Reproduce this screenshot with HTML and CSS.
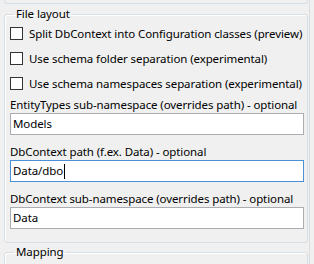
FILE: index.html
```html
<!DOCTYPE html>
<html lang="en">
<head>
  <meta charset="UTF-8">
  <title>File layout</title>
  <link rel="stylesheet" href="styles.css">
</head>
<body>
  <div class="panel">
    <div class="group-tail"></div>

    <fieldset class="group">
      <legend>File layout</legend>
      <div class="checks">
        <label class="check"><span class="box"></span>Split DbContext into Configuration classes (preview)</label>
        <label class="check"><span class="box"></span>Use schema folder separation (experimental)</label>
        <label class="check"><span class="box"></span>Use schema namespaces separation (experimental)</label>
      </div>
      <div class="field first">
        <div class="field-label">EntityTypes sub-namespace (overrides path) - optional</div>
        <div class="textbox">Models</div>
      </div>
      <div class="field">
        <div class="field-label">DbContext path (f.ex. Data) - optional</div>
        <div class="textbox focused">Data/dbo<span class="caret"></span></div>
      </div>
      <div class="field">
        <div class="field-label">DbContext sub-namespace (overrides path) - optional</div>
        <div class="textbox">Data</div>
      </div>
    </fieldset>

    <fieldset class="group">
      <legend>Mapping</legend>
    </fieldset>
  </div>
</body>
</html>
```

FILE: styles.css
```css
* {
  box-sizing: border-box;
}
body {
  margin: 0;
  background: #f0f0f0;
  color: #000;
  font-family: "Noto Sans", sans-serif;
  font-size: 11.5px;
  letter-spacing: -0.1px;
  overflow: hidden;
}
.panel {
  width: 310px;
  height: 264px;
  padding: 0 1px 0 4px;
  border-right: 1px solid #dcdcdc;
}
.group-tail {
  width: 304px;
  height: 4px;
  border: 1px solid #d5dfe5;
  border-top: none;
  border-radius: 0 0 3px 3px;
}
.group {
  width: 304px;
  margin: 2px 0 0 0;
  padding: 0 3px 13px 5px;
  border: 1px solid #d5dfe5;
  border-radius: 3px;
  box-shadow: inset 1px 1px 0 #fff;
}
.group + .group {
  margin-top: 1px;
}
.group legend {
  margin-left: 4px;
  padding: 0 2px;
  line-height: 16px;
}
.checks {
  display: flex;
  flex-direction: column;
  margin-top: -1px;
}
.check {
  display: flex;
  align-items: center;
  height: 25px;
  white-space: nowrap;
}
.box {
  width: 13px;
  height: 13px;
  margin-right: 6px;
  border: 1px solid #333;
  background: #fff;
  flex-shrink: 0;
}
.field {
  margin-top: 8px;
}
.field.first {
  margin-top: 0;
}
.field-label {
  line-height: 17px;
  white-space: nowrap;
}
.textbox {
  height: 22px;
  padding: 0 2px;
  line-height: 20px;
  border: 1px solid #abadb3;
  background: #fff;
  display: flex;
  align-items: center;
}
.textbox.focused {
  border-color: #4a90d9;
}
.caret {
  width: 1px;
  height: 15px;
  margin-left: 1px;
  background: #000;
}
```
